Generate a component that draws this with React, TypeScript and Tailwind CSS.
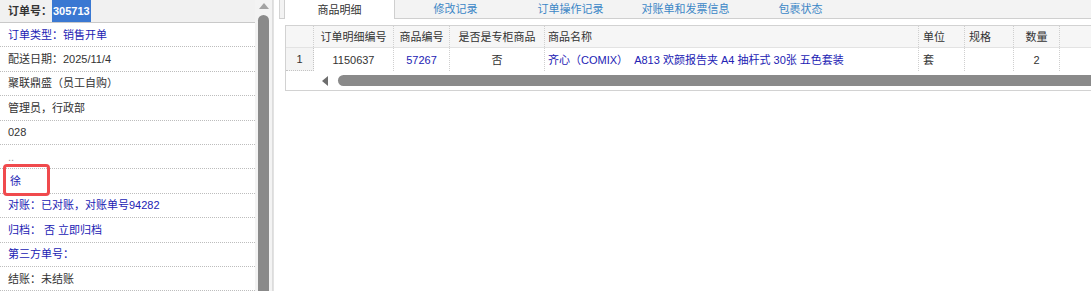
import React from "react";

const BLUE = "text-[#2222b4]";
const DARK = "text-[#333333]";

type Row = { text: string; cls: string; extra?: string };

const rows: Row[] = [
  { text: "订单类型：销售开单", cls: BLUE },
  { text: "配送日期：2025/11/4", cls: DARK },
  { text: "聚联鼎盛（员工自购）", cls: DARK },
  { text: "管理员，行政部", cls: DARK },
  { text: "028", cls: DARK },
  { text: "..", cls: "text-[#9a9a9a]" },
  { text: "徐", cls: BLUE, extra: "pl-[10px]" },
  { text: "对账：已对账，对账单号94282", cls: BLUE },
  { text: "归档： 否 立即归档", cls: BLUE },
  { text: "第三方单号：", cls: BLUE },
  { text: "结账：未结账", cls: DARK },
];

const tabs = ["修改记录", "订单操作记录", "对账单和发票信息", "包裹状态"];

export default function App() {
  return (
    <div
      className="flex w-[1091px] h-[291px] overflow-hidden bg-white text-[11px] leading-[14px]"
      style={{ fontFamily: '"Liberation Sans", "Noto Sans CJK SC", sans-serif' }}
    >
      {/* Left panel */}
      <div className="relative w-[255px] shrink-0 flex flex-col">
        <div className="h-[23px] shrink-0 flex items-center bg-[#f1f1f1] border-b border-[#c9c9c9] pl-[8px] font-bold text-[#333]">
          <span className="w-[44px] shrink-0">订单号：</span>
          <span className="bg-[#3a78d2] text-white h-[22px] flex items-center px-[1px]">305713</span>
        </div>
        {rows.map((r, i) => (
          <div
            key={i}
            className={`h-[24.4px] shrink-0 flex items-center border-b border-dotted border-[#bdbdbd] pl-[8px] ${r.cls} ${r.extra ?? ""}`}
          >
            {r.text}
          </div>
        ))}
        <div className="absolute left-[3px] top-[164px] w-[47px] h-[32px] border-[3px] border-[#f04a4d] rounded-[4px]" />
      </div>

      {/* Scrollbar */}
      <div className="relative w-[18px] shrink-0 bg-[#f3f3f3] border-r border-[#dcdcdc]">
        <svg className="absolute left-[4px] top-[3px]" width="10" height="6" viewBox="0 0 10 6">
          <polygon points="5,0 10,6 0,6" fill="#a3a3a3" />
        </svg>
        <div className="absolute left-[3px] top-[15px] w-[11px] h-[290px] rounded-full bg-[#8a8a8a]" />
      </div>

      {/* Right panel */}
      <div className="flex-1 min-w-0 overflow-hidden pl-[3px] border-l border-[#e2e2e2]">
        {/* Tabs */}
        <div className="h-[19px] flex items-end bg-[#f3f3f3] border-b border-[#cfcfcf] border-l border-l-[#d4d4d4] ml-[2px]">
          <div className="w-[111px] ml-[4px] h-[19px] -mb-px bg-white border-l border-r border-[#cfcfcf] flex items-center justify-center text-[#333]">
            商品明细
          </div>
          <div className="ml-[3px] flex">
            {tabs.map((t) => (
              <div key={t} className="w-[115px] h-[18px] flex items-center justify-center text-[#3b86c6]">
                {t}
              </div>
            ))}
          </div>
        </div>

        {/* Table */}
        <div className="ml-[8px] mt-[6px] w-[900px] border-t border-l border-b border-[#d2d2d2]">
          <div className="grid grid-cols-[28px_80px_56px_95px_374px_46px_49px_46px_80px] h-[22px] bg-[#f6f6f6] border-b border-[#e3e3e3] text-[#333]">
            <div className="border-r border-dotted border-[#cfcfcf]" />
            <div className="flex items-center justify-center border-r border-dotted border-[#cfcfcf]">订单明细编号</div>
            <div className="flex items-center justify-center border-r border-dotted border-[#cfcfcf]">商品编号</div>
            <div className="flex items-center justify-center border-r border-dotted border-[#cfcfcf]">是否是专柜商品</div>
            <div className="flex items-center pl-[3px] border-r border-dotted border-[#cfcfcf]">商品名称</div>
            <div className="flex items-center pl-[4px] border-r border-dotted border-[#cfcfcf]">单位</div>
            <div className="flex items-center pl-[4px] border-r border-dotted border-[#cfcfcf]">规格</div>
            <div className="flex items-center justify-center border-r border-dotted border-[#cfcfcf]">数量</div>
            <div />
          </div>
          <div className="grid grid-cols-[28px_80px_56px_95px_374px_46px_49px_46px_80px] h-[23px] text-[#333]">
            <div className="flex items-center justify-center bg-[#f4f4f4] border-r border-b border-dotted border-[#c4c4c4]">1</div>
            <div className="flex items-center justify-center border-r border-dotted border-[#cfcfcf]">1150637</div>
            <div className={`flex items-center justify-center border-r border-dotted border-[#cfcfcf] ${BLUE}`}>57267</div>
            <div className="flex items-center justify-center border-r border-dotted border-[#cfcfcf]">否</div>
            <div className={`flex items-center pl-[3px] border-r border-dotted border-[#cfcfcf] whitespace-pre ${BLUE}`}>
              齐心（COMIX）  A813 欢颜报告夹 A4 抽杆式 30张 五色套装
            </div>
            <div className="flex items-center pl-[4px] border-r border-dotted border-[#cfcfcf]">套</div>
            <div className="border-r border-dotted border-[#cfcfcf]" />
            <div className="flex items-center justify-center border-r border-dotted border-[#cfcfcf]">2</div>
            <div />
          </div>
          <div className="h-[19px] flex items-center">
            <svg className="ml-[36px]" width="6" height="10" viewBox="0 0 6 10">
              <polygon points="0,5 6,0 6,10" fill="#6e6e6e" />
            </svg>
            <div className="ml-[10px] flex-1 h-[11px] rounded-l-full bg-[#8a8a8a]" />
          </div>
        </div>
      </div>
    </div>
  );
}
